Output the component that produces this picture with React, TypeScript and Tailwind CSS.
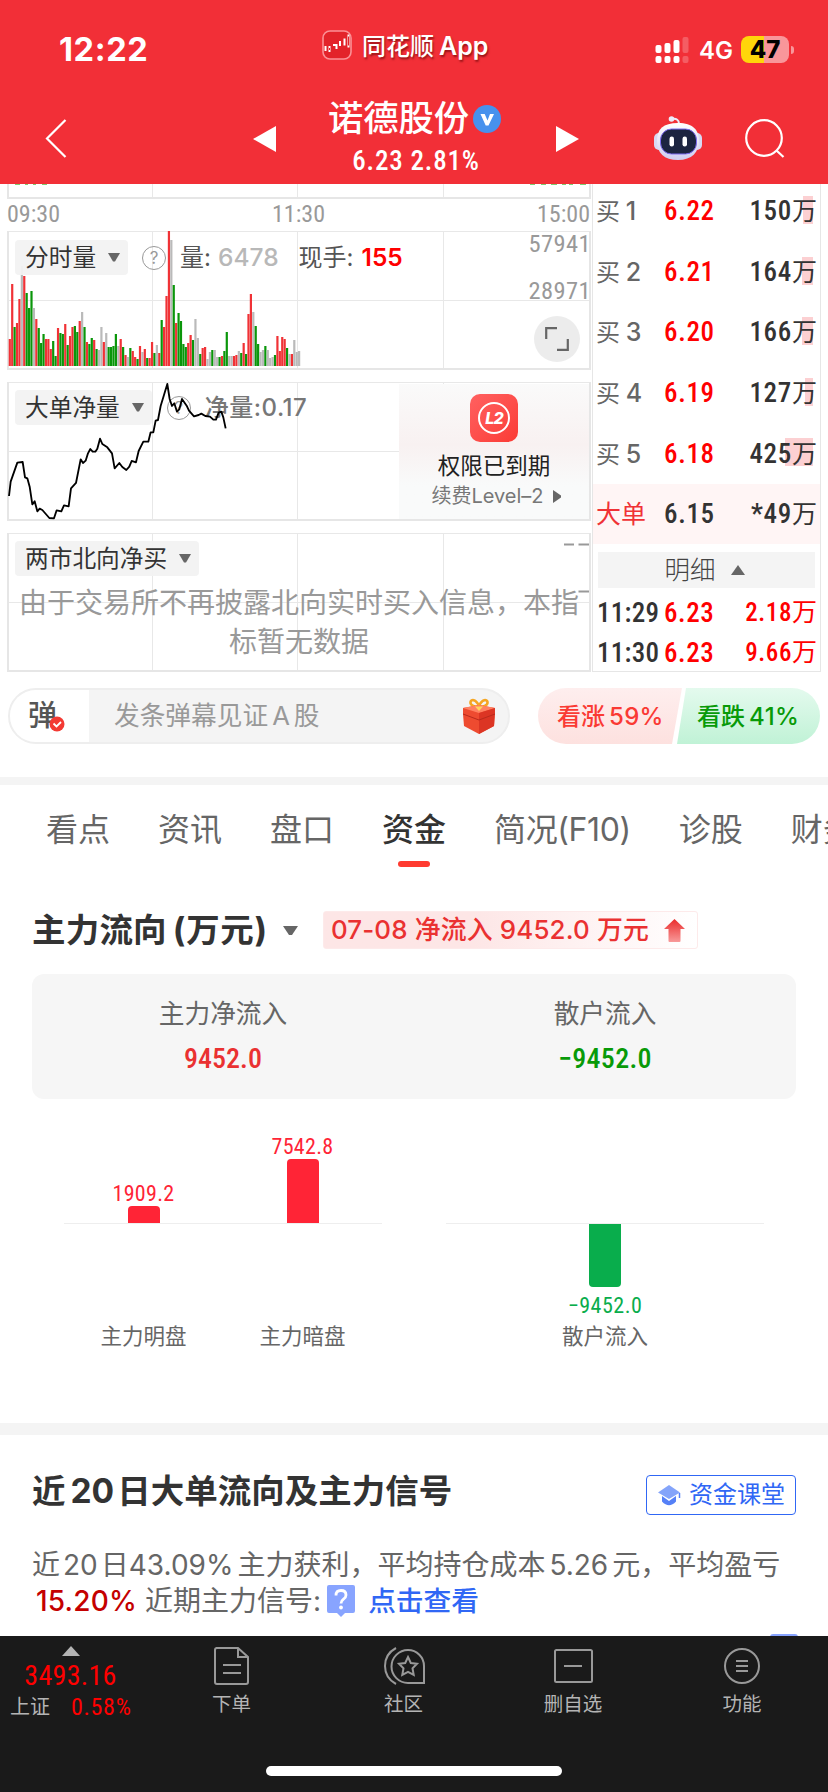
import { ReactNode } from "react";
import clsx from "clsx";

const DIN = "font-['Roboto','Noto_Sans_CJK_SC',sans-serif] [font-stretch:85%]";

// r = up, g = down, n = flat; number is the bar height
const volume =
  "r27 r82 g39 r43 r67 n100 r90 g73 g58 g75 n58 r47 g38 g23 g32 r27 r27 r17 g25 g10 r38 g33 g32 r42 g21 r30 r39 g40 g34 r45 n54 g39 r24 g22 g28 r26 g17 n16 n39 r24 n33 g19 g19 g20 g32 n20 r27 g19 r11 n9 g18 r15 r9 g7 r20 n14 r17 g8 r8 r24 g13 n21 r13 g46 r39 r70 r135 n126 g81 r43 g53 g45 g22 g19 r23 r31 g26 n47 n28 g12 r18 r19 n7 n14 g16 n16 n9 g9 r10 g15 g34 n10 n10 r10 r11 n15 g13 r23 g12 r52 r72 n54 g40 g22 n14 n16 g20 n16 n8 n9 g11 r30 r15 r29 r27 g18 n12 r12 n26 n14 n15".split(
    " "
  );

const barColor: Record<string, string> = {
  r: "#f03236",
  g: "#0a960a",
  n: "#bababa",
};

const netLine =
  "27,378 32,335 52,278 68,276 75,322 82,325 89,350 97,403 104,394 112,424 119,416 127,420 148,444 162,445 170,421 184,424 192,406 206,409 213,355 228,339 242,268 249,279 257,272 264,250 271,237 278,245 286,245 292,236 300,206 307,222 322,232 336,250 344,295 358,279 367,291 379,300 388,290 395,273 408,277 416,243 430,215 445,215 452,187 460,187 467,152 474,150 482,108 492,75 502,42 509,87 516,108 523,100 531,125 538,118 546,87 560,107 567,122 582,139 596,135 604,131 616,138 630,140 640,149 648,149 656,128 664,125 670,142 677,175";

const bids = [
  { n: 1, price: "6.22", vol: "150", w: "w-[10px]" },
  { n: 2, price: "6.21", vol: "164", w: "w-[11px]" },
  { n: 3, price: "6.20", vol: "166", w: "w-[11px]" },
  { n: 4, price: "6.19", vol: "127", w: "w-[8px]" },
  { n: 5, price: "6.18", vol: "425", w: "w-[28px]" },
];

const tabs = ["看点", "资讯", "盘口", "资金", "简况(F10)", "诊股", "财务"];

function Header() {
  return (
    <header className="h-[184px] w-full shrink-0 bg-[#f22f37] text-white">
      <div className="flex h-[92px] items-start pl-[59px]">
        <span className="mt-[34px] w-[263px] text-[32.500px] leading-[32px] font-bold tracking-[0.6px]">
          12:22
        </span>
        <svg className="mt-[30px]" width="30" height="30" viewBox="0 0 30 30">
          <rect x="1" y="1" width="28" height="28" rx="7" fill="#e3232a" stroke="#fb9196" strokeWidth="1.6" />
          <path
            d="M3.5 16v5M7.5 16v6M11 15h3M14.5 14v5M18 11v5M22.500 8.500v7M26.500 4.500v13"
            stroke="#fff"
            strokeWidth="2"
          />
          <path d="M7.500 18v2M26.500 6.500v9" stroke="#e3232a" strokeWidth="1" />
        </svg>
        <span className="mt-[34px] ml-[10px] flex items-baseline gap-[5px] text-[24px] leading-[24px] font-medium whitespace-nowrap [text-shadow:1px_2px_2px_rgba(90,0,0,0.6)]">
          同花顺<span className="text-[25px] font-semibold">App</span>
        </span>
        <svg className="mt-[36px] ml-auto" width="34" height="28" viewBox="0 0 34 28">
          <g fill="#fff">
            <rect x="0.500" y="9" width="6" height="8" rx="2" />
            <rect x="9.500" y="7" width="6" height="10" rx="2" />
            <rect x="18.500" y="4" width="6" height="13" rx="2" />
            <rect x="0.500" y="20" width="6" height="7" rx="2" />
            <rect x="9.500" y="20" width="6" height="7" rx="2" />
            <rect x="18.500" y="20" width="6" height="7" rx="2" />
          </g>
          <g fill="#fff" opacity="0.22">
            <rect x="27.500" y="1" width="6" height="16" rx="2" />
            <rect x="27.500" y="20" width="6" height="7" rx="2" />
          </g>
        </svg>
        <span className="mt-[39px] ml-[10px] w-[42px] text-[24px] leading-[24px] font-semibold">
          4G
        </span>
        <div className="mt-[36px] flex h-[27px] w-[48px] items-center justify-center rounded-[8px] bg-linear-to-r from-[#ffd60a] from-48% to-[#f9969a] to-48% text-[24px] leading-[27px] font-extrabold text-black">
          47
        </div>
        <div className="mt-[46px] mr-[34px] ml-[2px] h-[8px] w-[3px] rounded-r-full bg-[#f9969a]" />
      </div>
      <div className="flex h-[92px] items-start pl-[45px]">
        <svg className="mt-[26px]" width="22" height="40" viewBox="0 0 22 40" fill="none" stroke="#fff" strokeWidth="2.200">
          <path d="M20.500 2 2 20.500 20.500 39" />
        </svg>
        <svg className="mt-[34px] ml-[186px]" width="23" height="26" viewBox="0 0 23 26" fill="#fff">
          <path d="M23 0v26L0 13z" />
        </svg>
        <div className="ml-[38px] flex w-[204px] flex-col items-center">
          <div className="flex items-center gap-[4px] pt-[5px] pr-[3px]">
            <h1 className="text-[35.300px] leading-[44px] whitespace-nowrap font-medium">诺德股份</h1>
            <svg width="28" height="28" viewBox="0 0 28 28">
              <circle cx="14" cy="14" r="14" fill="#4791ed" />
              <path d="M7.500 9h4.200l2.800 6.500L17 9h4l-5.500 11.500h-2.800z" fill="#fff" />
            </svg>
          </div>
          <span className={clsx(DIN, "pt-px text-[27px] leading-[38px] font-medium tracking-[0.8px] whitespace-nowrap")}>
            6.23 2.81%
          </span>
        </div>
        <svg className="mt-[34px] ml-[38px]" width="23" height="26" viewBox="0 0 23 26" fill="#fff">
          <path d="M0 0v26l23-13z" />
        </svg>
        <svg className="mt-[24px] ml-[75px]" width="48" height="44" viewBox="0 0 48 44">
          <defs>
            <linearGradient id="shell" x1="0" y1="0" x2="0" y2="1">
              <stop offset="0" stopColor="#fff" />
              <stop offset="1" stopColor="#cfcdf0" />
            </linearGradient>
          </defs>
          <path d="M18 3q7-1 7 5" fill="none" stroke="#ecebfa" strokeWidth="2" />
          <circle cx="17.500" cy="3" r="2.800" fill="#ecebfa" />
          <rect x="0" y="17" width="10" height="17" rx="5" fill="#d8d9f3" />
          <rect x="38" y="17" width="10" height="17" rx="5" fill="#d8d9f3" />
          <path d="M24 7C39 7 45 14 45 25S38 44 24 44 3 37 3 25 9 7 24 7z" fill="url(#shell)" />
          <rect x="6.500" y="13" width="36" height="25" rx="11" fill="#1c2440" stroke="#7c6af0" strokeWidth="1" />
          <rect x="15.500" y="20.500" width="4.500" height="10" rx="2.200" fill="#fff" />
          <rect x="28.500" y="20.500" width="4.500" height="10" rx="2.200" fill="#fff" />
        </svg>
        <svg className="mt-[26px] ml-[43px]" width="40" height="40" viewBox="0 0 40 40" fill="none" stroke="#fff" strokeWidth="2.200">
          <circle cx="19" cy="20" r="17.800" />
          <path d="m31.500 32.500 7 6.500" />
        </svg>
      </div>
    </header>
  );
}

function Panel({ children, chart }: { children?: ReactNode; chart?: ReactNode }) {
  return (
    <div className="relative h-[139px] w-[584px] overflow-hidden">
      <svg className="absolute inset-0" width="584" height="139" viewBox="0 0 584 139">
        <path d="M145.500 0v139M290.500 0v139M436.500 0v139M0 69.500h584M0 .5h584" stroke="#e8e8e8" />
        <path d="M1 0v138h582V0" fill="none" stroke="#e6e6e6" strokeWidth="2" />
        {chart}
      </svg>
      {children}
    </div>
  );
}

function Pill({ children }: { children: ReactNode }) {
  return (
    <div className="flex h-[35px] items-center gap-[12px] rounded-[4px] bg-[#f2f2f2]/95 pr-[8px] pl-[10px] text-[23.700px] leading-[35px] whitespace-nowrap text-[#333]">
      {children}
      <svg width="12" height="9" viewBox="0 0 12 9" fill="#666">
        <path d="M0 0h12L7 8.500H5z" />
      </svg>
    </div>
  );
}

function Help() {
  return (
    <span className="flex size-[24px] items-center justify-center rounded-full border-[1.5px] border-[#999] text-[17px] leading-[20px] text-[#999]">
      ?
    </span>
  );
}

function Charts() {
  return (
    <div className="flex w-[592px] shrink-0 flex-col pl-[7px]">
      <div className="relative flex h-[15px] w-[584px] border-x-2 border-b-2 border-[#e6e6e6]">
        <div className="w-[144px] border-r border-[#e8e8e8]" />
        <div className="w-[145px] border-r border-[#e8e8e8]" />
        <div className="w-[146px] border-r border-[#e8e8e8]" />
        <svg className="absolute inset-0" width="580" height="1" viewBox="0 0 580 1" stroke="#7ccf74">
          <path d="M6 .5h5M16 .5h3M24 .5h3M33 .5h5M521 .5h5M532 .5h5M542 .5h6M553 .5h4M560 .5h4M571 .5h6" />
        </svg>
      </div>
      <div className={clsx(DIN, "flex h-[32px] w-[583px] justify-between text-[24px] leading-[31px] text-[#999]")}>
        <span>09:30</span>
        <span>11:30</span>
        <span>15:00</span>
      </div>
      <Panel
        chart={volume.map((v, i) => (
          <rect
            key={i}
            x={1.700 + i * 2.411}
            y={135 - Number(v.slice(1))}
            width="2.200"
            height={v.slice(1)}
            fill={barColor[v[0]]}
          />
        ))}
      >
        <div className="relative flex items-center pt-[9px] pl-[8px] text-[24px] leading-[35px] whitespace-nowrap text-[#555]">
          <Pill>分时量</Pill>
          <div className="mr-[14px] ml-[14px]">
            <Help />
          </div>
          <span>量:</span>
          <span className="ml-[7px] text-[24.500px] font-medium text-[#b8b8b8]">6478</span>
          <span className="ml-[20px]">现手:</span>
          <span className="ml-[8px] text-[24.500px] font-semibold text-[#f00]">155</span>
        </div>
        <div className={clsx(DIN, "absolute top-px right-0 flex flex-col gap-[23px] text-right text-[24.500px] leading-[24px] tracking-[0.4px] text-[#999]")}>
          <span>57941</span>
          <span>28971</span>
        </div>
        <div className="absolute right-[11px] bottom-[8px] flex size-[46px] items-center justify-center rounded-full bg-[#ececec]">
          <svg width="24" height="24" viewBox="0 0 24 24" fill="none" stroke="#666" strokeWidth="2.200">
            <path d="M1.200 12V1.200H12M12 22.800h10.800V12" />
          </svg>
        </div>
      </Panel>
      <div className="h-[12px]" />
      <Panel>
        <div className="relative flex items-center pt-[8px] pl-[8px] text-[24px] leading-[35px] whitespace-nowrap text-[#777]">
          <Pill>大单净量</Pill>
          <div className="mr-[14px] ml-[15px]">
            <Help />
          </div>
          <span className="font-medium tracking-[0.5px]">净量:0.17</span>
        </div>
        <svg className="absolute inset-0" width="584" height="139" viewBox="0 0 584 139">
          <polyline
            points={netLine}
            transform="translate(-7 -12) scale(.3333)"
            fill="none"
            stroke="#000"
            strokeWidth="5.500"
            strokeLinejoin="round"
          />
        </svg>
        <div className="absolute top-[2px] right-[2px] flex h-[135px] w-[190px] flex-col items-center bg-linear-to-b from-[#fafafa] via-[#f8f1f1] via-45% to-[#f9fafa] to-75% pt-[10px]">
          <div className="flex size-[48px] items-center justify-center rounded-[10px] bg-linear-to-br from-[#ff6060] to-[#fb3a34]">
            <div className="flex size-[32px] items-center justify-center rounded-full border-2 border-white text-[16px] leading-none font-extrabold tracking-tighter text-white italic">
              L2
            </div>
          </div>
          <span className="mt-[10px] text-[22.500px] leading-[28px] text-[#222]">权限已到期</span>
          <span className="mt-[2px] flex items-center gap-[9px] pl-1 text-[20px] leading-[28px] whitespace-nowrap text-[#777]">
            续费Level–2
            <svg width="8" height="13" viewBox="0 0 8 13" fill="#666">
              <path d="M0 0 8 5.500v2L0 13z" />
            </svg>
          </span>
        </div>
      </Panel>
      <div className="h-[12px]" />
      <Panel>
        <div className="relative flex pt-[8px] pl-[8px]">
          <Pill>两市北向净买</Pill>
        </div>
        <p className="relative mt-[8px] text-center text-[28px] leading-[39px] text-[#999]">
          由于交易所不再披露北向实时买入信息，本指
          <br />
          标暂无数据
        </p>
        <svg className="absolute top-0 right-[2px]" width="26" height="70" viewBox="0 0 26 70" stroke="#999" strokeWidth="2">
          <path d="M1 11.500h10M15.500 11.500H26M15.500 58.500H26" />
        </svg>
      </Panel>
    </div>
  );
}

function OrderBook() {
  return (
    <aside className={clsx(DIN, "h-[488px] w-[229px] shrink-0 overflow-hidden border-x border-b border-[#e6e6e6] text-[27px] font-medium")}>
      <div className="-mt-[3px] flex flex-col">
        {bids.map((b) => (
          <div key={b.n} className="relative flex h-[60.600px] items-center pt-px pr-[3px] pl-[3px] leading-none">
            <div className={clsx("absolute top-[15px] right-[7px] h-[28px] bg-[#fcd0d2]", b.w)} />
            <span className="w-[68px] font-['Inter','Noto_Sans_CJK_SC',sans-serif] text-[24px] font-normal whitespace-nowrap text-[#666]">
              买 <span className="-ml-px text-[25px] font-medium">{b.n}</span>
            </span>
            <span className="tracking-[0.7px] text-[#f00]">{b.price}</span>
            <span className="relative ml-auto tracking-[0.7px] text-[#333]">
              {b.vol}
              <span className="text-[25px] font-normal tracking-normal">万</span>
            </span>
          </div>
        ))}
        <div className="flex h-[60.500px] items-center bg-[#fff5f5] pt-px pr-[3px] pl-[3px] leading-none">
          <span className="w-[68px] text-[25px] font-normal text-[#f03236]">大单</span>
          <span className="tracking-[0.7px] text-[#333]">6.15</span>
          <span className="ml-auto tracking-[0.7px] text-[#333]">
            *49<span className="text-[25px] font-normal tracking-normal">万</span>
          </span>
        </div>
      </div>
      <div className="mx-[5px] mt-[8px] flex h-[36px] items-center justify-center gap-[15px] bg-[#f4f4f4] pr-[4px] text-[25.500px] leading-none font-light text-[#444]">
        明细
        <svg width="14" height="10" viewBox="0 0 14 10" fill="#666">
          <path d="M7 0l7 10H0z" />
        </svg>
      </div>
      <div className="mt-[5px] pr-[3px] pl-[4px] leading-[40px] tracking-[0.6px] text-[#f00]">
        <div className="flex h-[40px]">
          <span className="w-[67px] tracking-[0.3px] text-[#333]">11:29</span>
          <span>6.23</span>
          <span className="ml-auto text-[25px]">
            2.18<span className="font-normal tracking-normal">万</span>
          </span>
        </div>
        <div className="flex h-[40px]">
          <span className="w-[67px] tracking-[0.3px] text-[#333]">11:30</span>
          <span>6.23</span>
          <span className="ml-auto text-[25px]">
            9.66<span className="font-normal tracking-normal">万</span>
          </span>
        </div>
      </div>
    </aside>
  );
}

function Gift() {
  return (
    <svg width="34" height="36" viewBox="0 0 34 36">
      <path d="M17 9C12 9 8 7 8.500 4S14 1 17 8C20 1 25 1 25.500 4S22 9 17 9z" fill="none" stroke="#f5a623" strokeWidth="2.600" />
      <path d="M1 10 17 7l16 3v6l-1 12-15 8-15-8-1-12z" fill="#ee4b30" />
      <path d="M1 10 17 7l16 3-16 5z" fill="#ff8161" />
      <path d="M17 15v21l15-8 1-18z" fill="#dc3524" />
      <path d="M1 16l16 6 16-6" fill="none" stroke="#b92a1c" strokeWidth="1" />
      <path d="M13 8.500h8L17 13z" fill="#ffd35c" />
    </svg>
  );
}

function BarrageRow() {
  return (
    <div className="mt-[16px] flex h-[56px] pl-[8px] text-[24px] leading-[56px]">
      <div className="flex w-[502px] items-center overflow-hidden rounded-full border-2 border-[#eee] bg-[#f4f4f4]">
        <div className="relative flex h-full w-[79px] items-center bg-white pl-[18px]">
          <span className="text-[29px] leading-[52px] font-medium text-[#555]">弹</span>
          <svg className="absolute top-[26px] left-[39px]" width="16" height="16" viewBox="0 0 16 16">
            <circle cx="8" cy="8" r="7.500" fill="#f33a33" />
            <path d="m4.500 7.500 3 3 4.500-4.500" fill="none" stroke="#fff" strokeWidth="1.800" />
          </svg>
        </div>
        <span className="flex gap-[4px] pl-[25px] text-[25.700px] leading-[52px] text-[#999]">
          发条弹幕见证<span>A</span>
          <span>股</span>
        </span>
        <div className="mr-[12px] ml-auto">
          <Gift />
        </div>
      </div>
      <div className="ml-[28px] flex w-[282px] text-[24px] font-medium whitespace-nowrap">
        <div className="w-[144px] rounded-l-full rounded-r-[5px] bg-linear-to-b from-[#feeeee] to-[#fde1df] pt-px pl-[19px] text-[#fa3a34] [clip-path:polygon(0_0,100%_0,134px_100%,0_100%)]">
          看涨<span className="pl-[4px] tracking-[0.3px]">59%</span>
        </div>
        <div className="-ml-[5px] w-[143px] rounded-l-[5px] rounded-r-full bg-linear-to-b from-[#e4faee] to-[#c0f2d6] pt-px pl-[20px] text-[#089a08] [clip-path:polygon(9px_0,100%_0,100%_100%,0_100%)]">
          看跌<span className="pl-[4px] tracking-[0.5px]">41%</span>
        </div>
      </div>
    </div>
  );
}

function Tabs() {
  return (
    <nav className="flex h-[88px] gap-[48px] overflow-hidden pt-[20px] pl-[46px] text-[32px] leading-[50px] whitespace-nowrap text-[#666]">
      {tabs.map((t) => (
        <div
          key={t}
          className={clsx(
            "flex shrink-0 flex-col items-center",
            t === "资金" && "font-medium text-[#333]",
            t === "简况(F10)" && "tracking-[-0.4px]"
          )}
        >
          {t}
          {t === "资金" && <div className="mt-[6px] h-[6px] w-[32px] rounded-[3px] bg-[#ff3b30]" />}
        </div>
      ))}
    </nav>
  );
}

function FundFlow() {
  return (
    <section className="flex flex-col px-[32px]">
      <div className="mt-[38px] flex h-[38px] items-center">
        <h2 className="text-[33.500px] leading-[38px] font-bold tracking-[0.2px] whitespace-nowrap text-[#333]">
          主力流向<span className="pl-[6px] tracking-[0.7px]">(万元)</span>
        </h2>
        <svg className="ml-[15px]" width="15" height="9" viewBox="0 0 15 9" fill="#666">
          <path d="M0 0h15L9 9H6z" />
        </svg>
        <div className="ml-[25px] flex h-[38px] w-[375px] items-center rounded-[3px] border border-[#fdeaea] bg-linear-to-r from-[#fde6e6] from-40% to-white pl-[7px] text-[25.900px] leading-[36px] font-medium tracking-[0.15px] whitespace-nowrap text-[#ea3131]">
          07-08 净流入 9452.0 万元
          <svg className="ml-[15px] shrink-0" width="21" height="23" viewBox="0 0 21 23">
            <defs>
              <linearGradient id="up" x1="0" y1="0" x2="0" y2="1">
                <stop offset="0" stopColor="#ea2b2b" />
                <stop offset="1" stopColor="#f89a9a" />
              </linearGradient>
            </defs>
            <path d="M10.500 0 21 10h-4.500v12q0 1-1 1h-10q-1 0-1-1V10H0z" fill="url(#up)" />
          </svg>
        </div>
      </div>
      <div className="mt-[25px] grid h-[125px] grid-cols-2 rounded-[12px] bg-[#f6f6f6] pt-[22px] text-center">
        <div className="flex flex-col">
          <span className="text-[25.700px] leading-[36px] text-[#666]">主力净流入</span>
          <span className={clsx(DIN, "mt-[9px] text-[28px] leading-[36px] font-medium text-[#ea3131]")}>9452.0</span>
        </div>
        <div className="flex flex-col">
          <span className="text-[25.700px] leading-[36px] text-[#666]">散户流入</span>
          <span className={clsx(DIN, "mt-[9px] text-[28px] leading-[36px] font-medium tracking-[0.3px] text-[#089a08]")}>
            −9452.0
          </span>
        </div>
      </div>
      <div className={clsx(DIN, "flex h-[253px] justify-between px-[32px] pt-[33px] text-[22px] leading-[24px]")}>
        <div className="flex w-[318px] justify-around">
          <div className="flex w-[100px] flex-col items-center text-[#ff2436]">
            <div className="flex h-[91px] flex-col items-center justify-end">
              <span className="tracking-[0.3px]">1909.2</span>
              <div className="h-[17px] w-[32px] rounded-t-[4px] bg-[#ff2436]" />
            </div>
            <div className="h-px w-[159px] bg-[#eee]" />
            <span className="mt-[101px] text-[21.500px] text-[#666]">主力明盘</span>
          </div>
          <div className="flex w-[100px] flex-col items-center text-[#ff2436]">
            <div className="flex h-[91px] flex-col items-center justify-end">
              <span className="tracking-[0.3px]">7542.8</span>
              <div className="h-[64px] w-[32px] rounded-t-[4px] bg-[#ff2436]" />
            </div>
            <div className="h-px w-[159px] bg-[#eee]" />
            <span className="mt-[101px] text-[21.500px] text-[#666]">主力暗盘</span>
          </div>
        </div>
        <div className="flex w-[318px] flex-col items-center pt-[91px] text-[#09ad4c]">
          <div className="h-px w-full bg-[#eee]" />
          <div className="h-[63px] w-[32px] rounded-b-[4px] bg-[#09ad4c]" />
          <span className="mt-[7px] tracking-[0.5px]">−9452.0</span>
          <span className="mt-[7px] text-[21.500px] text-[#666]">散户流入</span>
        </div>
      </div>
    </section>
  );
}

function Signals() {
  return (
    <section className="flex flex-col px-[32px] pt-[40px]">
      <div className="flex items-start justify-between">
        <h2 className="text-[33.500px] leading-[33px] font-bold whitespace-nowrap text-[#333]">
          近<span className="pr-[3px] pl-[5px]">20</span>日大单流向及主力信号
        </h2>
        <button className="flex h-[40px] w-[150px] items-center gap-[8px] rounded-[4px] border-[1.5px] border-[#3067f5] pl-[10px] text-[24px] leading-[36px] whitespace-nowrap text-[#3067f5]">
          <svg width="24" height="21" viewBox="0 0 24 21">
            <path d="M12 0 23 7.500 12 14 1 7.500z" fill="#84a4fa" />
            <path d="M5 11v5.500q7 7.500 14 0V11l-7 5z" fill="#5580f7" />
            <path d="M22.500 8v5" stroke="#5580f7" strokeWidth="1.500" />
          </svg>
          资金课堂
        </button>
      </div>
      <div className="mt-[32px] text-[28px] leading-[36px] whitespace-nowrap text-[#666]">
        <p>
          近<span className="px-[3px]">20</span>日43.09%<span className="pl-[4px]">主力获利，平均持仓成本</span>
          <span className="px-[4px]">5.26</span>元，平均盈亏
        </p>
        <p className="flex h-[36px] items-center">
          <span className="mr-[8px] ml-[4px] font-medium tracking-[0.2px] text-[#c40000]">15.20%</span>
          近期主力信号:
          <svg className="mt-[-1px] ml-[6px]" width="28" height="32" viewBox="0 0 28 32">
            <path d="M2 0h24q2 0 2 2v24q0 2-2 2h-8l-4 4-4-4H2q-2 0-2-2V2q0-2 2-2z" fill="#88a4ff" />
            <path d="M9 10.500Q9 5.500 14 5.500t5 4.500q0 2.500-2.500 4.200T14 18.500" fill="none" stroke="#fff" strokeWidth="2.800" />
            <circle cx="14" cy="22.500" r="1.900" fill="#fff" />
          </svg>
          <span className="ml-[13px] text-[27.700px] font-medium text-[#3067f5]">点击查看</span>
        </p>
      </div>
      <div className="mt-[15px] mr-[-2px] h-[28px] w-[28px] self-end rounded-[3px] bg-[#88a4ff]" />
    </section>
  );
}

function NavItem({ label, children, className }: { label: string; children: ReactNode; className: string }) {
  return (
    <div className={clsx("flex flex-col items-center pt-[10px] text-[19.500px] leading-[24px] text-[#b4b4b4]", className)}>
      <svg width="42" height="40" viewBox="0 0 42 40" fill="none" stroke="#999" strokeWidth="2">
        {children}
      </svg>
      <span className="mt-[6px]">{label}</span>
    </div>
  );
}

function BottomBar() {
  return (
    <footer className="flex h-[156px] w-full shrink-0 flex-col items-center justify-between bg-[#1a1a1a] pb-[16px]">
      <div className="flex w-full">
        <div className="flex w-[141px] flex-col items-center pt-[10px] text-[#f00]">
          <svg width="18" height="10" viewBox="0 0 18 10" fill="#b4b4b4">
            <path d="M9 0l9 10H0z" />
          </svg>
          <span className={clsx(DIN, "mt-[6px] text-[28px] leading-[28px] tracking-[0.3px]")}>3493.16</span>
          <div className="mt-[5px] flex w-full items-center pl-[10px] leading-[24px]">
            <span className="w-[61px] text-[20px] text-[#b4b4b4]">上证</span>
            <span className={clsx(DIN, "text-[24px] tracking-[0.7px]")}>0.58%</span>
          </div>
        </div>
        <NavItem label="下单" className="ml-[5px] w-[171px]">
          <path d="M5 2h22l10 9v25q0 2-2 2H6q-2 0-2-2V4q0-2 2-2M27 2v9h10M12 19h18M12 27h18" />
        </NavItem>
        <NavItem label="社区" className="w-[173px]">
          <path d="M13 2Q2 8 2 20t11 18" />
          <path d="M25 4a16 16 0 0 0 0 33h16V20A16 16 0 0 0 25 4z" />
          <path d="m25 11 2.800 6 6.200.8-4.500 4.500 1.200 6.500-5.700-3-5.700 3 1.200-6.500-4.500-4.500 6.200-.8z" />
        </NavItem>
        <NavItem label="删自选" className="w-[166px]">
          <rect x="3" y="4" width="37" height="32" rx="1.500" />
          <path d="M12 20h18" />
        </NavItem>
        <NavItem label="功能" className="w-[172px]">
          <circle cx="21" cy="20" r="17" />
          <path d="M15 15h12M15 20h12M15 25h12" />
        </NavItem>
      </div>
      <div className="h-[10px] w-[296px] rounded-full bg-white" />
    </footer>
  );
}

export default function App() {
  return (
    <div className="flex h-[1792px] w-[828px] flex-col overflow-hidden bg-white font-['Inter','Noto_Sans_CJK_SC',sans-serif]">
      <Header />
      <main className="flex min-h-0 flex-1 flex-col overflow-hidden *:shrink-0">
        <div className="flex">
          <Charts />
          <OrderBook />
        </div>
        <BarrageRow />
        <div className="mt-[33px] h-[8px] bg-[#f4f4f4]" />
        <Tabs />
        <FundFlow />
        <div className="mt-[71px] h-[12px] bg-[#f4f4f4]" />
        <Signals />
      </main>
      <BottomBar />
    </div>
  );
}
